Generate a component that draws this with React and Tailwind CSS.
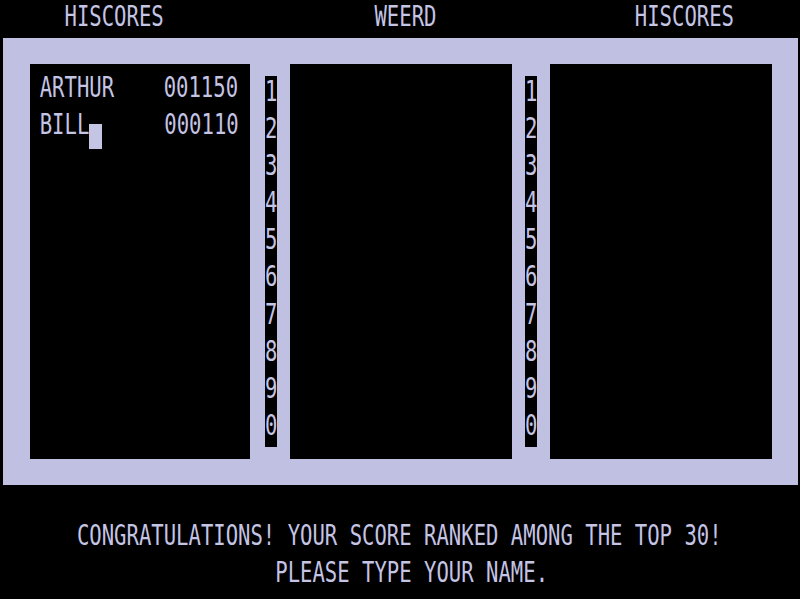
const F =
  "font-['DejaVu_Sans_Mono',monospace] text-[20.6px] leading-none whitespace-pre inline-block origin-top scale-y-[1.4]";

function Strip() {
  const digits = ["1", "2", "3", "4", "5", "6", "7", "8", "9", "0"];
  return (
    <div className="w-[12.4px] h-full bg-black flex flex-col">
      {digits.map((d) => (
        <div key={d} className="h-[37.1px]">
          <span className={F}>{d}</span>
        </div>
      ))}
    </div>
  );
}

export default function App() {
  return (
    <div className="w-[800px] h-[599px] bg-black text-[#c4c4e4] overflow-hidden">
      <div className="h-[38px] pl-[2.5px] pt-[0.5px]">
        <span className={F}>
          {"     HISCORES                 WEERD                HISCORES"}
        </span>
      </div>

      <div className="ml-[3px] w-[795px] h-[447px] bg-[#c0c0e2] flex pt-[26px] pb-[26px] pl-[27px]">
        <div className="w-[220px] bg-black pt-[9px] pl-[9.7px]">
          <div className="h-[37.4px] flex items-start">
            <span className={F}>{"ARTHUR    001150"}</span>
          </div>
          <div className="h-[37.4px] flex items-start">
            <span className={F}>{"BILL"}</span>
            <div className="w-[13px] h-[25px] mt-[14px] bg-[#c4c4e4]" />
            <span className={F}>{"     000110"}</span>
          </div>
        </div>

        <div className="w-[40px] pl-[15px] pt-[12px] pb-[12px]">
          <Strip />
        </div>

        <div className="w-[222px] bg-black" />

        <div className="w-[38px] pl-[13px] pt-[12px] pb-[12px]">
          <Strip />
        </div>

        <div className="w-[222px] bg-black" />
      </div>

      <div className="pl-[2.5px] pt-[34.6px]">
        <div className="h-[37px]">
          <span className={F}>
            {"      CONGRATULATIONS! YOUR SCORE RANKED AMONG THE TOP 30!"}
          </span>
        </div>
        <div className="h-[37px]">
          <span className={F}>{"                      PLEASE TYPE YOUR NAME."}</span>
        </div>
      </div>
    </div>
  );
}
